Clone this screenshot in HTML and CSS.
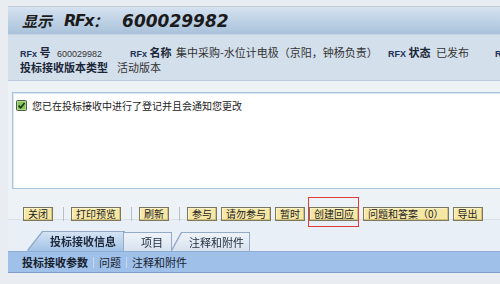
FILE: index.html
```html
<!DOCTYPE html>
<html lang="zh">
<head>
<meta charset="utf-8">
<link rel="stylesheet" href="styles.css">
</head>
<body>
<div class="page">
  <div class="titlebar">
    <span class="t-cjk">显示</span><span class="t-lat">RFx</span><span class="t-colon">：</span><span class="t-num">600029982</span>
  </div>
  <div class="info">
    <div class="row1">
      <span class="lbl"><span class="lat">RFx</span> 号</span>
      <span class="val"><span class="lat">600029982</span></span>
      <span class="lbl"><span class="lat">RFx</span> 名称</span>
      <span class="val">集中采购-水位计电极（京阳，钟杨负责）</span>
      <span class="lbl"><span class="lat">RFX</span> 状态</span>
      <span class="val">已发布</span>
      <span class="lbl"><span class="lat">RFx</span> 版本</span>
    </div>
    <div class="row2">
      <span class="lbl">投标接收版本类型</span>
      <span class="val">活动版本</span>
    </div>
  </div>
  <div class="content">
    <div class="msgbox">
      <div class="msg">
        <svg class="chk" width="11" height="11" viewBox="0 0 11 11"><rect x="0.5" y="0.5" width="10" height="10" rx="1" fill="#86c45a" stroke="#4d5a4d"/><rect x="1.5" y="1.5" width="8" height="8" fill="none" stroke="#b6e08e" stroke-width="0.8"/><path d="M2.6 5.6 L4.6 7.8 L8.6 3" fill="none" stroke="#16331a" stroke-width="1.6"/></svg>
        <span>您已在投标接收中进行了登记并且会通知您更改</span>
      </div>
    </div>
    <div class="toolbar">
      <span class="btn">关闭</span>
      <span class="sep"></span>
      <span class="btn">打印预览</span>
      <span class="sep"></span>
      <span class="btn">刷新</span>
      <span class="sep"></span>
      <span class="btn">参与</span>
      <span class="btn">请勿参与</span>
      <span class="btn">暂时</span>
      <span class="btn marked">创建回应<span class="redbox"></span></span>
      <span class="btn">问题和答案（0）</span>
      <span class="btn">导出</span>
    </div>
  </div>
  <div class="tabs">
    <div class="tabwrap"><div class="tab active">投标接收信息</div></div>
    <div class="tabwrap"><div class="tab t2">项目</div></div>
    <div class="tabwrap"><div class="tab t3">注释和附件</div></div>
  </div>
  <div class="subbar">
    <span class="sub cur">投标接收参数</span>
    <span class="subsep"></span>
    <span class="sub">问题</span>
    <span class="subsep"></span>
    <span class="sub">注释和附件</span>
  </div>
</div>
</body>
</html>
```
FILE: styles.css
```css
html, body {
  margin: 0;
  padding: 0;
  width: 500px;
  height: 284px;
  overflow: hidden;
  background: #e9edf1;
  font-family: "Noto Sans CJK SC", "Liberation Sans", sans-serif;
}
.page {
  padding: 6px 0 0 8px;
  width: 492px;
}
.titlebar {
  height: 27px;
  border-top: 1px solid #c3cfdb;
  background: linear-gradient(#d5e2f0, #a9c2da);
  display: flex;
  align-items: center;
  padding-left: 14px;
  font-weight: bold;
  font-style: italic;
  color: #1b1b1b;
  white-space: nowrap;
}
.t-cjk {
  font-size: 15px;
  margin-right: 12px;
}
.t-lat {
  font-family: "DejaVu Sans", sans-serif;
  font-size: 16px;
  letter-spacing: -1.5px;
}
.t-colon {
  font-size: 15px;
  margin-right: 14px;
}
.t-num {
  font-family: "DejaVu Sans", sans-serif;
  font-size: 17px;
  letter-spacing: 0;
}
.info {
  background: #d3dfeb;
  border-top: 1px solid #c4d3e2;
  border-bottom: 1px solid #bccadb;
  padding: 11px 0 6px 12px;
  font-size: 11px;
  line-height: 13px;
  color: #333;
  overflow: hidden;
  white-space: nowrap;
}
.row1 {
  display: grid;
  grid-template-columns: 37px 73px 46px 212px 48px 59px 60px;
}
.row2 {
  display: flex;
  gap: 9px;
}
.lbl {
  font-weight: bold;
  color: #1b2638;
}
.lat {
  font-family: "Liberation Sans", sans-serif;
  font-size: 9px;
}
.lbl .lat {
  color: #1d2f55;
}
.content {
  background: #edf2f6;
  padding: 11px 0 0 4px;
  height: 138px;
  box-sizing: border-box;
}
.msgbox {
  height: 95px;
  border: 1px solid #a9c3db;
  border-right: none;
  box-shadow: inset 1px 1px 0 #dbe7f2;
  background: #fff;
}
.msg {
  display: flex;
  align-items: center;
  gap: 5px;
  padding: 6px 0 0 3px;
  font-size: 10px;
  line-height: 13px;
  color: #222;
}
.chk {
  display: block;
  flex: none;
}
.toolbar {
  display: flex;
  align-items: center;
  gap: 4px;
  padding: 18px 0 0 11px;
}
.btn {
  position: relative;
  display: inline-block;
  height: 12px;
  line-height: 12px;
  font-size: 10px;
  padding: 0 4px;
  background: #f6e7a5;
  border: 1px solid #7b7760;
  box-shadow: inset -1px -1px 0 #d5c27a, inset 1px 1px 0 #fff5cc;
  color: #232323;
  white-space: nowrap;
}
.sep {
  width: 1px;
  height: 14px;
  background: #b7bec6;
  margin: 0 3px 0 6px;
}
.redbox {
  position: absolute;
  left: -2px;
  right: -1px;
  top: -11px;
  bottom: -7px;
  border: 1px solid #e23b3b;
}
.tabs {
  height: 31px;
  border-top: 1px solid #d8dfe7;
  background: #e9eff7;
  display: flex;
  align-items: flex-end;
  padding-left: 20px;
}
.tabwrap {
  filter: drop-shadow(1px 0 0 #93abc8) drop-shadow(-1px 0 0 #93abc8) drop-shadow(0 -1px 0 #93abc8);
}
.tab {
  height: 18px;
  line-height: 18px;
  font-size: 11px;
  color: #1e2a3a;
  white-space: nowrap;
  box-sizing: border-box;
}
.tab.active {
  width: 96px;
  height: 19px;
  line-height: 19px;
  padding-left: 22px;
  font-weight: bold;
  background: linear-gradient(#d4e3f3, #a3c2e8);
  clip-path: polygon(0 100%, 15px 0, 100% 0, 100% 100%);
}
.tab.t2 {
  width: 47px;
  padding-left: 17px;
  background: linear-gradient(#eef3f9, #d8e3ef);
}
.tab.t3 {
  width: 77px;
  padding-left: 17px;
  margin-left: 1px;
  background: linear-gradient(#eef3f9, #d8e3ef);
  clip-path: polygon(0 100%, 10px 0, 100% 0, 100% 100%);
}
.subbar {
  height: 20px;
  border-top: 1px solid #8fadd2;
  border-bottom: 1px solid #7f9ec6;
  background: #9fc0e8;
  display: flex;
  align-items: center;
  gap: 5px;
  padding-left: 14px;
  font-size: 11px;
  color: #17202e;
  white-space: nowrap;
}
.sub.cur {
  font-weight: bold;
}
.subsep {
  width: 1px;
  height: 11px;
  background: #c8d9ee;
}
```
